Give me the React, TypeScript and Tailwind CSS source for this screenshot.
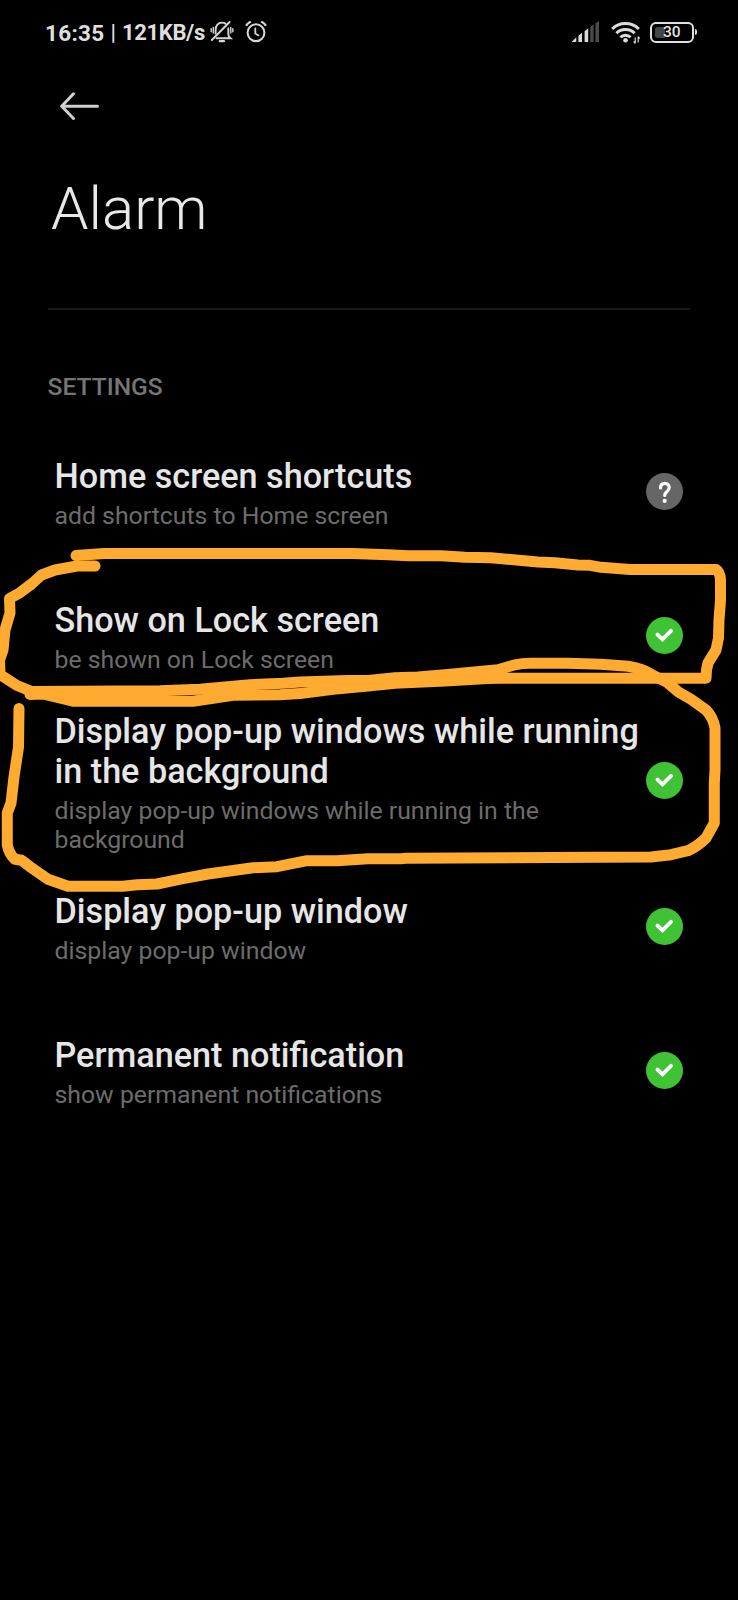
type Status = "granted" | "ask";

interface Permission {
  title: string;
  detail: string;
  status: Status;
  height: string;
}

const permissions: Permission[] = [
  { title: "Home screen shortcuts", detail: "add shortcuts to Home screen", status: "ask", height: "h-[143px]" },
  { title: "Show on Lock screen", detail: "be shown on Lock screen", status: "granted", height: "h-[144px]" },
  {
    title: "Display pop-up windows while running in the background",
    detail: "display pop-up windows while running in the background",
    status: "granted",
    height: "h-[147px]",
  },
  { title: "Display pop-up window", detail: "display pop-up window", status: "granted", height: "h-[144px]" },
  { title: "Permanent notification", detail: "show permanent notifications", status: "granted", height: "h-[144px]" },
];

function MutedBell() {
  return (
    <svg className="ml-[5px] h-6 w-6" viewBox="0 0 24 24" fill="none" stroke="#d6d6d6" strokeLinecap="round">
      <path d="M6.5 18.300h14c-1.500-1.200-2.200-2.300-2.200-4V8.500" strokeWidth="1.900" />
      <path d="M5.600 13.500V9.800C5.600 5.700 8.300 2.600 11.800 2.600c1.500 0 2.800.4 3.800 1.200" strokeWidth="1.900" />
      <path d="M1.800 20 19.600 2" strokeWidth="1.900" />
      <path d="M9.800 21.200h4.200" strokeWidth="2.200" />
      <path d="M3.300 7.500v5.500M1.200 8.800v3M20.800 7.500v5.500M22.800 8.800v3" strokeWidth="1.400" />
    </svg>
  );
}

function AlarmClock() {
  return (
    <svg className="ml-[10px] h-6 w-6" viewBox="0 0 24 24" fill="none" stroke="#d6d6d6" strokeWidth="2.100" strokeLinecap="round">
      <circle cx="12" cy="12.700" r="8.400" />
      <path d="M11.300 8.500v4.900l3.200 2" strokeWidth="1.800" />
      <path d="M2.600 5c1-1.300 2.100-2.200 3.500-2.900M21.400 5c-1-1.300-2.100-2.200-3.500-2.900" strokeWidth="2.200" />
    </svg>
  );
}

function Signal() {
  return (
    <svg className="h-6 w-7" viewBox="0 0 28 24">
      <path d="M.5 22 5.300 17.300V22z M7.400 15.700 11 12.700V22H7.400z M13.600 11.200 17.200 8.200V22h-3.600z" fill="#d9d9d9" />
      <path d="M19.200 6.900 22.600 4.300V22h-3.400z M24.400 3.200 28 1V22h-3.600z" fill="#4a4a4a" />
    </svg>
  );
}

function Wifi() {
  return (
    <svg className="ml-[12px] h-6 w-[30px]" viewBox="0 0 30 24" fill="none" stroke="#dcdcdc" strokeWidth="3">
      <path d="M1.200 9C8.400 1.800 20.600 1.800 27.800 9" />
      <path d="M5.400 13.200C10.300 8.300 18.700 8.300 23.600 13.200" />
      <path d="M9.400 17.300c2.800-2.900 7.400-2.900 10.200 0" />
      <circle cx="14.500" cy="20.200" r="2.300" fill="#dcdcdc" stroke="none" />
      <path d="M24.200 17.500v6M27.200 16.500v6M24.200 23.300l-1.500-1.800M27.200 16.700l1.500 1.800" strokeWidth="1.200" />
    </svg>
  );
}

function Battery() {
  return (
    <div className="ml-[9px] flex items-center">
      <div className="flex h-[21px] w-[44px] items-center rounded-[6px] border-2 border-[#e0e0e0] p-[3px]">
        <div className="h-[11px] w-[10px] shrink-0 rounded-l-[2px] bg-[#454545]" />
        <span className="-ml-[2px] pt-px text-[15.500px] leading-[15px] font-medium text-[#e2e2e2]">30</span>
      </div>
      <div className="ml-px h-[6px] w-[2px] rounded-r-sm bg-[#d6d6d6]" />
    </div>
  );
}

function StatusBar() {
  return (
    <div className="flex h-16 items-center pr-[41px] pl-[45px] text-[#dedede]">
      <span className="pt-px text-[22.500px] leading-6 font-bold tracking-[0.300px]">16:35</span>
      <span className="ml-[6px] pt-px text-[22px] leading-6 font-medium">|</span>
      <span className="ml-[6px] pt-px text-[22px] leading-6 font-bold tracking-[-0.350px]">121KB/s</span>
      <MutedBell />
      <AlarmClock />
      <div className="ml-auto flex items-center">
        <Signal />
        <Wifi />
        <Battery />
      </div>
    </div>
  );
}

function StatusIcon({ status }: { status: Status }) {
  return (
    <svg className="h-[37px] w-[37px] shrink-0" viewBox="0 0 37 37" fill="none" stroke="#fff" strokeLinecap="round" strokeLinejoin="round">
      <circle cx="18.500" cy="18.500" r="18.500" stroke="none" fill={status === "granted" ? "#3fc335" : "#666666"} />
      {status === "granted" ? (
        <path d="M11.500 17.600 16.500 22.300 25 13.900" strokeWidth="4" strokeLinejoin="miter" />
      ) : (
        <>
          <path d="M14.500 14.900c0-3 1.800-4.500 4.300-4.500s4.400 1.600 4.400 4.200c0 2-1 2.900-2.400 4.100-1.400 1.200-2.100 2-2.100 3.700" strokeWidth="3.200" />
          <circle cx="18.700" cy="27.900" r="2.100" fill="#fff" stroke="none" />
        </>
      )}
    </svg>
  );
}

function PermissionRow({ title, detail, status, height }: Permission) {
  return (
    <li className={`flex items-center justify-between pr-[55px] pl-[54.500px] ${height}`}>
      <div className="flex w-[588px] shrink-0 flex-col gap-[5px] pt-[3px]">
        <h2 className="text-[34.200px] leading-10 font-medium text-[#e6e6e6]">{title}</h2>
        <p className="w-[520px] text-[24.800px] leading-[29px] text-[#6c6c6c]">{detail}</p>
      </div>
      <StatusIcon status={status} />
    </li>
  );
}

function MarkerStrokes() {
  return (
    <svg
      className="pointer-events-none absolute inset-0 h-[1600px] w-[738px]"
      viewBox="0 0 738 1600"
      fill="none"
      stroke="#ffab32"
      strokeWidth="11"
      strokeLinecap="round"
      strokeLinejoin="round"
    >
      <path d="M95 566H77L55 570 41.500 575 31.500 584 20 592.700 9.500 598.500 10 613 5 630 3 650-.5 660 0 674.500 17 685.500 33 692" />
      <path d="M76 555.500 104 553.500H353L388 554.700 408 555.700H441L465 557.300 491 557.700 538 562 555 562.700 578 565 590 565.300 601 567.300 630 569.500H716Q720 572 720.500 580V600L719 620 718.500 638 716 650 708 663 706.500 670 706 678.300H501L488 678.500 445 681 395 683.300 368 686 333 689.200 300 693.600 280 694.700 233 695.200 193 701.200H73L43 694 30 694.500" />
      <path d="M33 691.500 160 690.700 200 689.300 250 684.700 283 683.300 300 681.900 347 680.500 368 680.500 395 677.800 418 677 445 674.700 498 669.800 515 664.800Q522 663.200 530 663.200H568L601 664.200 628 666.200Q642 668.500 650 673.500L668 683 678 691.700 691 699.300 706 710Q713 717 715 728V770L714.300 783V823L706 838Q698 846 688 850.700L671 854.700 651 857 598 857.300 406 858.300 401 858.700H368L337 860.700H307L277 866.700 253 867.700 208 874 183 878.700 157 884 137 884.700 123 886.300H68L48 879.300 30 866.700 21.700 860.300 15 859.300Q9 854 7.300 845V813L11 803 14 777 18.500 747 19 708.500" />
    </svg>
  );
}

export default function App() {
  return (
    <main className="relative h-[1600px] w-[738px] overflow-hidden bg-black font-[Roboto,sans-serif]">
      <StatusBar />
      <header className="flex flex-col">
        <button className="ml-[60px] flex h-[84px] w-10 items-center" aria-label="Back">
          <svg className="h-7 w-10" viewBox="0 0 40 28" fill="none" stroke="#d2cfcf" strokeWidth="3" strokeLinecap="round" strokeLinejoin="round">
            <path d="M13.500 1.800 1.700 14.300 13.500 26.500M1.700 14.300H37.500" />
          </svg>
        </button>
        <h1 className="mt-[26px] ml-[51px] text-[60px] leading-[70px] font-light text-[#e8e8e8]">Alarm</h1>
      </header>
      <hr className="mt-16 mr-12 ml-12 border-t-2 border-[#191919]" />
      <section className="mt-[62px]">
        <div className="h-[48px] pl-[47.500px] text-[24.600px] leading-[29px] font-medium text-[#757575]">SETTINGS</div>
        <ul>
          {permissions.map((p) => (
            <PermissionRow key={p.title} {...p} />
          ))}
        </ul>
      </section>
      <MarkerStrokes />
    </main>
  );
}
